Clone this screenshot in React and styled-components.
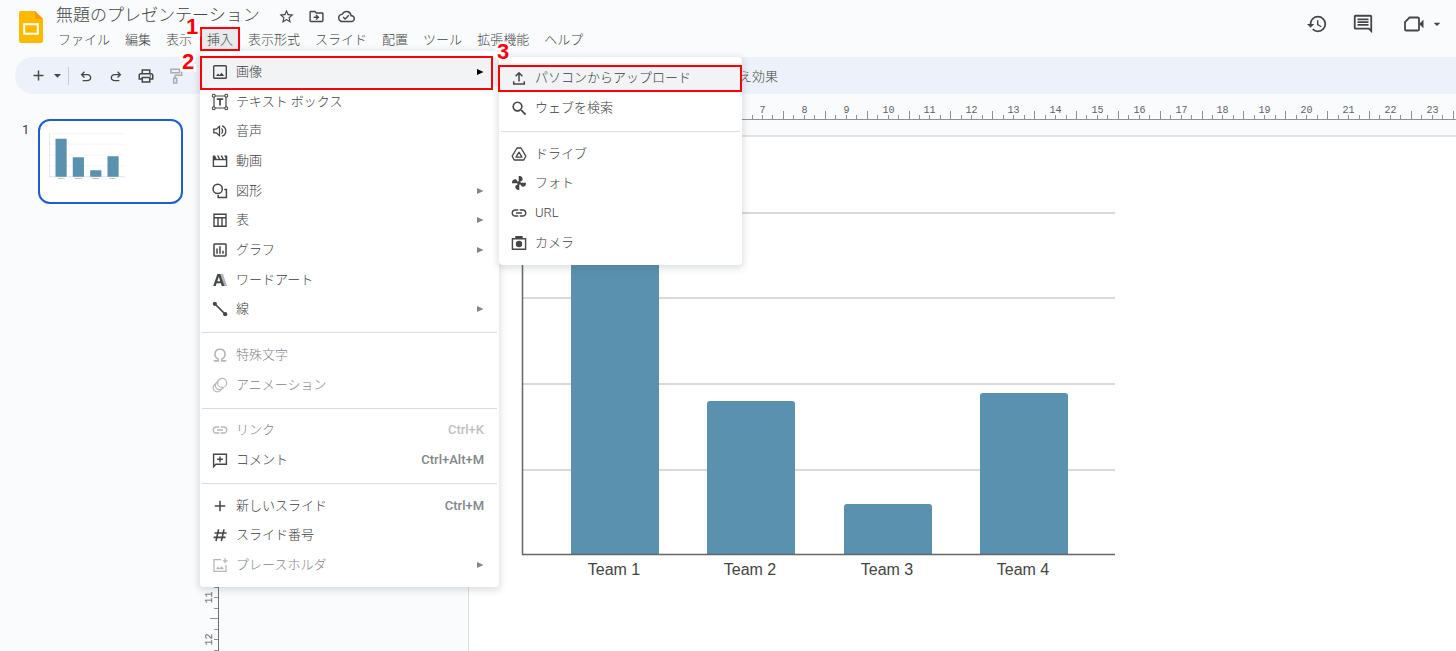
import React from 'react';
import styled, { createGlobalStyle } from 'styled-components';
import { MdStarBorder, MdOutlineDriveFileMove, MdOutlineCloudDone, MdHistory, MdOutlineComment, MdOutlinePrint, MdArrowDropDown, MdAdd, MdSearch, MdLink, MdOutlineInsertChart } from 'react-icons/md';

const GlobalStyle = createGlobalStyle`
  * {
    box-sizing: border-box;
  }
  body {
    margin: 0;
    background: #f9fbfd;
    color: #3c4043;
    font-family: Roboto, "Noto Sans CJK JP", sans-serif;
    font-size: 13px;
    font-weight: 300;
  }
  button {
    font: inherit;
    color: inherit;
    border: 0;
    padding: 0;
    background: none;
    cursor: pointer;
  }
  ul {
    list-style: none;
    margin: 0;
    padding: 0;
  }
  svg {
    display: block;
    flex: none;
  }
`;

const Page = styled.div`
  display: flex;
  flex-direction: column;
  height: 100vh;
  overflow: hidden;
`;

const Header = styled.header`
  display: flex;
  height: 57px;
  padding-left: 19px;
  color: #444746;

  .logo {
    margin-top: 11px;
  }
`;

const HeaderMain = styled.div`
  flex: 1;
  margin-left: 8px;
`;

const TitleRow = styled.div`
  display: flex;
  align-items: center;
  height: 27px;
  padding: 5px 0 0 5px;
  gap: 14px;
`;

const Title = styled.h1`
  margin: -3px 5px 0 0;
  font-size: 17px;
  font-weight: 300;
  line-height: 24px;
  white-space: nowrap;
`;

const IconButton = styled.button`
  display: flex;
  align-items: center;
  justify-content: center;
  width: ${(props) => props.$size || 16}px;
  height: ${(props) => props.$size || 16}px;
  opacity: ${(props) => (props.$faded ? 0.4 : 1)};
`;

const HeaderActions = styled.div`
  display: flex;
  align-items: center;
  height: 48px;
  padding-right: 11px;
  gap: 24px;

  .meet {
    display: flex;
    align-items: center;
    justify-content: space-between;
    width: 41px;
    margin-left: 6px;
  }
`;

const MenuBar = styled.ul`
  display: flex;
  gap: 1px;
`;

const MenuBarItem = styled.li`
  position: relative;
`;

const MenuBarButton = styled.button`
  height: 24px;
  padding: 0 7px;
  line-height: 26px;
  white-space: nowrap;
  background: ${(props) => (props.$open ? '#e8eaed' : 'none')};
`;

const Menu = styled.ul`
  position: absolute;
  z-index: 5;
  left: ${(props) => (props.$sub ? '100%' : '0')};
  top: ${(props) => (props.$sub ? '0' : '100%')};
  display: flex;
  flex-direction: column;
  width: ${(props) => (props.$sub ? 243 : 299)}px;
  height: ${(props) => (props.$sub ? 208 : 536)}px;
  padding: 6px 0 7px;
  background: #fff;
  border-radius: 4px;
  box-shadow: 0 2px 6px 2px rgba(60, 64, 67, 0.15);
`;

const MenuRow = styled.li`
  position: relative;
  flex: 1;
  display: flex;
`;

const MenuButton = styled.button`
  flex: 1;
  display: flex;
  align-items: center;
  gap: 8px;
  padding: 0 15px 0 12px;
  text-align: left;
  line-height: 20px;
  white-space: nowrap;
  background: ${(props) => (props.$active ? '#f1f3f4' : 'none')};
  color: ${(props) => (props.disabled ? '#80868b' : '#3c4043')};

  .icon {
    color: ${(props) => (props.disabled ? '#b4b7ba' : '#444746')};
    overflow: visible;
  }
  .label {
    flex: 1;
  }
  .shortcut {
    color: ${(props) => (props.disabled ? '#bdc1c6' : '#80868b')};
    font-weight: 500;
  }
  .arrow {
    color: ${(props) => (props.$active ? '#000' : '#80868b')};
  }
`;

const Separator = styled.li`
  height: 1px;
  margin: 8px 2px 7px;
  background: #dadce0;
`;

const Callout = styled.span`
  position: absolute;
  z-index: 10;
  inset: ${(props) => props.$inset};
  border: 2px solid #fb0007;
  pointer-events: none;
`;

const CalloutNumber = styled.span`
  position: absolute;
  left: ${(props) => props.$x}px;
  top: ${(props) => props.$y}px;
  color: #fb0007;
  font: bold 22px/22px "Liberation Sans", sans-serif;
  -webkit-text-stroke: 5px #fff;
  paint-order: stroke fill;
`;

const Toolbar = styled.div`
  display: flex;
  align-items: center;
  height: 37px;
  margin-left: 15px;
  padding-left: 15px;
  background: #edf2fa;
  border-radius: 18px 0 0 18px;
  color: #444746;

  .divider {
    width: 1px;
    height: 18px;
    background: #c7cbd1;
  }
  .transition {
    margin-left: 486px;
    white-space: nowrap;
  }
`;

const ToolGroup = styled.div`
  display: flex;
  align-items: center;
  gap: ${(props) => props.$gap}px;
  margin-right: ${(props) => props.$after || 0}px;
`;

const Workspace = styled.div`
  flex: 1;
  display: flex;
  min-height: 0;
`;

const Filmstrip = styled.aside`
  display: flex;
  align-items: flex-start;
  flex: none;
  width: 200px;
  padding: 25px 0 0 22px;
  font-weight: 400;
  line-height: 22px;
  gap: 9px;
`;

const Thumbnail = styled.button`
  width: 145px;
  height: 85px;
  padding: 12px 0 0 9px;
  display: flex;
  align-items: flex-start;
  background: #fff;
  border: 2px solid #1f5bd3;
  border-radius: 12px;
`;

const Editor = styled.main`
  flex: 1;
  display: flex;
  flex-direction: column;
  min-width: 0;
`;

const TopRuler = styled.div`
  flex: none;
  height: 26px;
  overflow: hidden;
  border-bottom: 1px solid #8f9296;
`;

const EditorBody = styled.div`
  flex: 1;
  display: flex;
  min-height: 0;
`;

const SideRuler = styled.div`
  flex: none;
  width: 19px;
  overflow: hidden;
  border-right: 1px solid #6b6f73;
`;

const Stage = styled.div`
  flex: 1;
  display: flex;
  min-width: 0;
  padding: 15px 0 0 249px;
`;

const Slide = styled.div`
  flex: 1;
  min-width: 0;
  padding: 74px 0 0 51px;
  overflow: hidden;
  background: #fff;
  border-top: 2px solid #e1e3e4;
  border-left: 1px solid #dadce0;
`;

const stroke = { fill: 'none', stroke: 'currentColor', strokeWidth: 1.4 };

const blade = 'M7.7 8.3V1C10.6.7 12.200 2.900 11.500 5.200L9.600 6.600z';

const icons = {
  image: (
    <g {...stroke}>
      <rect x="1.7" y="1.7" width="12.6" height="12.6" rx="0.8" />
      <path d="M4 12l2-2.400 1.600 1.500 2-2.300 2.600 3.200z" fill="currentColor" stroke="none" />
    </g>
  ),
  textBox: (
    <g {...stroke} strokeWidth="1.2">
      <path d="M2 3v10M14 3v10M3 2h10M3 14h10" />
      <path d="M4.8 5.2h6.4M8 5.2v6.3" strokeWidth="1.7" />
      <path d="M.4.4h2.6V3H.4zM13 .4h2.6V3H13zM.4 13h2.6v2.6H.4zM13 13h2.6v2.6H13z" fill="#fff" strokeWidth="1" />
    </g>
  ),
  audio: (
    <g {...stroke} strokeWidth="1.3">
      <path d="M1.8 6.2h2.4L7.5 3.4v9.2L4.2 9.8H1.8z" />
      <path d="M9.4 5.5c1.6 1 1.6 4 0 5M10 2.8c5 1.6 5 8.8 0 10.4" />
    </g>
  ),
  video: (
    <g {...stroke}>
      <path d="M1.4 3v10.4h13.2V3M1.4 6.6h13.2" />
      <path d="M1 2.5h2L4.8 6H1zM5 2.5h1.5L8.2 6H6.6zM8.6 2.5h1.5L11.8 6h-1.6zM12.2 2.5H15V6h-1.2z" fill="currentColor" stroke="none" />
    </g>
  ),
  shape: (
    <g {...stroke} strokeWidth="1.5">
      <circle cx="5.7" cy="5.9" r="4.6" />
      <path d="M12.2 6.5h2.2v8H6.2V12" />
    </g>
  ),
  table: (
    <g {...stroke}>
      <path d="M2 2.2h12v12H2zM2 5.8h12M6 6v8M10 6v8" />
    </g>
  ),
  wordArt: (
    <g fill="currentColor">
      <path d="M8 2h3l4 12h-3z" opacity="0.4" />
      <path d="M5.4 2h2.8l4.3 12H9.8l-.9-2.8H4.6L3.7 14H1.2zM6.8 4.7L5.3 9.2h2.9z" fillRule="evenodd" />
    </g>
  ),
  line: (
    <g {...stroke}>
      <path d="M2.5 2.5l11 11" strokeWidth="1.7" />
      <circle cx="2.8" cy="2.8" r="2.1" fill="currentColor" stroke="none" />
      <circle cx="13.2" cy="13.2" r="2.1" fill="currentColor" stroke="none" />
    </g>
  ),
  omega: <path {...stroke} strokeWidth="1.6" d="M1.8 13.9h4.5v-1.6C1 9.2 2.4 2.3 8 2.3s7 6.9 1.7 10v1.6h4.5" />,
  animation: (
    <g {...stroke} fill="#fff" strokeWidth="1.2">
      <circle cx="5.400" cy="10.700" r="4.200" />
      <circle cx="7.600" cy="8.500" r="4.200" />
      <circle cx="10.200" cy="5.900" r="4.500" />
    </g>
  ),
  comment: (
    <g {...stroke}>
      <path d="M1.6 14.6V2.2h12.8v10H3.8zM8 4.4v5.8M5.1 7.3h5.8" />
    </g>
  ),
  hash: <path {...stroke} strokeWidth="1.6" d="M6.6 2.4L4 14M12 2.4L9.4 14M2.6 6h12M1.6 10.4h12" />,
  placeholder: (
    <g {...stroke} strokeWidth="1.3">
      <path d="M9 2.6H2v11.8h12V8M10.6 3.8h5M13.1 1.3v5" />
      <path d="M4 12.2l2-2.6L7.6 11.4l2-2.2 2.4 3z" fill="currentColor" stroke="none" />
    </g>
  ),
  upload: <path {...stroke} strokeWidth="1.5" d="M8 11.4V3.2M4.6 6.2L8 2.8l3.4 3.4M2.7 11.200v2.900h10.6v-2.900" />,
  drive: (
    <g {...stroke} strokeWidth="1.3" strokeLinejoin="round">
      <path d="M6 2h4l4.8 8.2-2 3.8H3.2l-2-3.8z" />
      <path d="M8 6.2l3 5H5z" />
    </g>
  ),
  photos: (
    <g fill="currentColor">
      {[0, 90, 180, 270].map((angle) => (
        <path key={angle} d={blade} transform={`rotate(${angle} 8 8)`} />
      ))}
      <circle cx="8" cy="8" r="1.800" />
    </g>
  ),
  camera: (
    <g {...stroke}>
      <path d="M1.400 3.700h13.200v10.600H1.400z" />
      <path d="M5 3.500V1.600h6v1.900" fill="currentColor" />
      <circle cx="8" cy="9" r="3.200" fill="currentColor" stroke="none" />
    </g>
  ),
  link: <MdLink size={18} x={-1} y={-1} />,
  chart: <MdOutlineInsertChart size={18} x={-1} y={-1} />,
  add: <MdAdd size={18} x={-1} y={-1} />,
  search: <MdSearch size={19} x={-1} y={-1} />,
};

const insertMenu = [
  { icon: 'image', label: '画像', arrow: true, active: true },
  { icon: 'textBox', label: 'テキスト ボックス' },
  { icon: 'audio', label: '音声' },
  { icon: 'video', label: '動画' },
  { icon: 'shape', label: '図形', arrow: true },
  { icon: 'table', label: '表', arrow: true },
  { icon: 'chart', label: 'グラフ', arrow: true },
  { icon: 'wordArt', label: 'ワードアート' },
  { icon: 'line', label: '線', arrow: true },
  null,
  { icon: 'omega', label: '特殊文字', disabled: true },
  { icon: 'animation', label: 'アニメーション', disabled: true },
  null,
  { icon: 'link', label: 'リンク', shortcut: 'Ctrl+K', disabled: true },
  { icon: 'comment', label: 'コメント', shortcut: 'Ctrl+Alt+M' },
  null,
  { icon: 'add', label: '新しいスライド', shortcut: 'Ctrl+M' },
  { icon: 'hash', label: 'スライド番号' },
  { icon: 'placeholder', label: 'プレースホルダ', arrow: true, disabled: true },
];

const imageMenu = [
  { icon: 'upload', label: 'パソコンからアップロード', active: true },
  { icon: 'search', label: 'ウェブを検索' },
  null,
  { icon: 'drive', label: 'ドライブ' },
  { icon: 'photos', label: 'フォト' },
  { icon: 'link', label: 'URL' },
  { icon: 'camera', label: 'カメラ' },
];

const menuNames = ['ファイル', '編集', '表示', '挿入', '表示形式', 'スライド', '配置', 'ツール', '拡張機能', 'ヘルプ'];

function MenuItem(props) {
  const { item, children } = props;

  return (
    <MenuRow>
      <MenuButton type='button' $active={item.active} disabled={item.disabled}>
        <svg className='icon' width='16' height='16' viewBox='0 0 16 16'>{icons[item.icon]}</svg>
        <span className='label'>{item.label}</span>
        {item.shortcut && <span className='shortcut'>{item.shortcut}</span>}
        {item.arrow && (
          <svg className='arrow' width='8' height='8' viewBox='0 0 8 8'>
            <path d='M1 1l6.500 3L1 7z' fill='currentColor' />
          </svg>
        )}
      </MenuButton>
      {children}
    </MenuRow>
  );
}

function ImageMenu() {
  return (
    <Menu $sub>
      {imageMenu.map((item, i) => item ? (
        <MenuItem key={i} item={item}>
          {item.active && (
            <Callout $inset='2px 0 1px -1px'>
              <CalloutNumber $x={-3} $y={-26}>3</CalloutNumber>
            </Callout>
          )}
        </MenuItem>
      ) : <Separator key={i} />)}
    </Menu>
  );
}

function InsertMenu() {
  return (
    <Menu>
      {insertMenu.map((item, i) => item ? (
        <MenuItem key={i} item={item}>
          {item.active && (
            <>
              <Callout $inset='-1px 6px -3px 0'>
                <CalloutNumber $x={-20} $y={-7}>2</CalloutNumber>
              </Callout>
              <ImageMenu />
            </>
          )}
        </MenuItem>
      ) : <Separator key={i} />)}
    </Menu>
  );
}

const teams = [
  { name: 'Team 1', x: 51, top: 44 },
  { name: 'Team 2', x: 187, top: 190 },
  { name: 'Team 3', x: 324, top: 293 },
  { name: 'Team 4', x: 460, top: 182 },
];

function TeamChart(props) {
  const { width, height } = props;

  return (
    <svg width={width} height={height} viewBox='0 0 598 376'>
      {[2, 87, 173, 259].map((y) => (
        <path key={y} d={`M2 ${y}h593`} stroke='#ccc' strokeWidth='1.6' />
      ))}
      {teams.map((team) => (
        <g key={team.name}>
          <path d={`M${team.x} 343V${team.top + 3}q0-3 3-3h82q3 0 3 3V343z`} fill='#5991af' />
          <text x={team.x + 43} y='364' textAnchor='middle' fill='#444' fontSize='16' fontWeight='400' fontFamily='"Liberation Sans", sans-serif'>{team.name}</text>
        </g>
      ))}
      <path d='M2.500 2v341.500H595' fill='none' stroke='#666' strokeWidth='1.500' />
    </svg>
  );
}

// one centimetre on the ruler is 41.86px at this zoom
const UNIT = 41.86;

function Ruler(props) {
  const { start, last, vertical } = props;
  const marks = [];

  for (let i = 0; i < last * 4 + 4; i++) {
    const pos = Math.round(start + (i * UNIT) / 4) + 0.5;
    const size = i % 4 === 2 ? 8 : 4;
    marks.push(
      <path key={i} stroke='#8f9296' d={vertical ? `M18 ${pos}h-${size}` : `M${pos} 25v-${size}`} />
    );
    if (i % 4 === 0 && i > 0) {
      marks.push(
        <text key={`t${i}`} textAnchor='middle' transform={vertical ? `translate(12 ${pos}) rotate(-90)` : `translate(${pos} 19)`}>{i / 4}</text>
      );
    }
  }

  return (
    <svg
      width={vertical ? 18 : 1320}
      height={vertical ? 1100 : 25}
      fill='#5f6368'
      fontSize='10'
      fontWeight='400'
      fontFamily='"Liberation Mono", monospace'
    >
      {marks}
    </svg>
  );
}

const undoPath = 'M7 19v-2h7.100q1.575 0 2.738-1T18 13.500t-1.162-2.500T14.100 10H7.800l2.600 2.600L9 14 4 9l5-5 1.400 1.400L7.800 8h6.300q2.425 0 4.163 1.575T20 13.500t-1.737 3.925T14.100 19z';

function App() {
  return (
    <Page>
      <GlobalStyle />
      <Header>
        <svg className='logo' width='24' height='32' viewBox='0 0 24 32'>
          <path d='M2 0h14l8 8v22a2 2 0 0 1-2 2H2a2 2 0 0 1-2-2V2a2 2 0 0 1 2-2z' fill='#ffba00' />
          <path d='M16 0l8 8h-6.500A1.500 1.500 0 0 1 16 6.500z' fill='#ff9a00' />
          <path d='M5.200 13.200h13.600v9.600H5.200z' fill='none' stroke='#fff' strokeWidth='2' />
        </svg>
        <HeaderMain>
          <TitleRow>
            <Title>無題のプレゼンテーション</Title>
            <IconButton type='button' aria-label='スターを付ける'><MdStarBorder size={17} /></IconButton>
            <IconButton type='button' aria-label='移動'><MdOutlineDriveFileMove size={17} /></IconButton>
            <IconButton type='button' aria-label='ドキュメントのステータス'><MdOutlineCloudDone size={17} /></IconButton>
          </TitleRow>
          <MenuBar>
            {menuNames.map((name) => (
              <MenuBarItem key={name}>
                <MenuBarButton type='button' $open={name === '挿入'}>{name}</MenuBarButton>
                {name === '挿入' && (
                  <>
                    <Callout $inset='0'>
                      <CalloutNumber $x={-16} $y={-13}>1</CalloutNumber>
                    </Callout>
                    <InsertMenu />
                  </>
                )}
              </MenuBarItem>
            ))}
          </MenuBar>
        </HeaderMain>
        <HeaderActions>
          <IconButton type='button' $size={22} aria-label='変更履歴'><MdHistory size={22} /></IconButton>
          <IconButton type='button' $size={22} aria-label='コメント'><MdOutlineComment size={22} /></IconButton>
          <button className='meet' type='button' aria-label='通話'>
            <svg width='20' height='16' viewBox='0 0 20 16'>
              <path d='M5.500 1.500h8.200q1.300 0 1.300 1.300v10.400q0 1.300-1.300 1.300H2.300Q1 14.500 1 13.200V6z' fill='none' stroke='currentColor' strokeWidth='1.800' />
              <path d='M15 8l4.500-4.300v8.600z' fill='currentColor' />
            </svg>
            <MdArrowDropDown size={16} />
          </button>
        </HeaderActions>
      </Header>

      <Toolbar>
        <ToolGroup $gap={2} $after={9}>
          <IconButton type='button' aria-label='新しいスライド'><MdAdd size={17} /></IconButton>
          <IconButton type='button' $size={18} aria-label='レイアウトを選択'><MdArrowDropDown size={17} /></IconButton>
          <span className='divider' />
        </ToolGroup>
        <ToolGroup $gap={14}>
          <IconButton type='button' aria-label='元に戻す'>
            <svg width='16' height='16' viewBox='0 0 24 22'><path d={undoPath} fill='currentColor' /></svg>
          </IconButton>
          <IconButton type='button' aria-label='やり直し'>
            <svg width='16' height='16' viewBox='0 0 24 22'><path d={undoPath} fill='currentColor' transform='matrix(-1 0 0 1 24 0)' /></svg>
          </IconButton>
          <IconButton type='button' aria-label='印刷'><MdOutlinePrint size={18} /></IconButton>
          <IconButton type='button' aria-label='書式を貼り付け' $faded>
            <svg width='16' height='16' viewBox='0 0 16 16'>
              <path d='M3 1.200h8.500v3.600H3zM11.500 2.800h2.200v4.400H7.200V10M5.700 10.200h3v4.800h-3z' fill='none' stroke='currentColor' strokeWidth='1.500' />
            </svg>
          </IconButton>
          <IconButton type='button' aria-label='ズーム'><MdSearch size={17} /></IconButton>
        </ToolGroup>
        <button className='transition' type='button'>切り替え効果</button>
      </Toolbar>

      <Workspace>
        <Filmstrip>
          <span>1</span>
          <Thumbnail type='button' aria-label='スライド 1'>
            <TeamChart width={76} height={48} />
          </Thumbnail>
        </Filmstrip>
        <Editor>
          <TopRuler><Ruler start={269} last={23} /></TopRuler>
          <EditorBody>
            <SideRuler><Ruler start={17} last={12} vertical /></SideRuler>
            <Stage>
              <Slide>
                <TeamChart width={598} height={376} />
              </Slide>
            </Stage>
          </EditorBody>
        </Editor>
      </Workspace>
    </Page>
  );
}

export default App;
